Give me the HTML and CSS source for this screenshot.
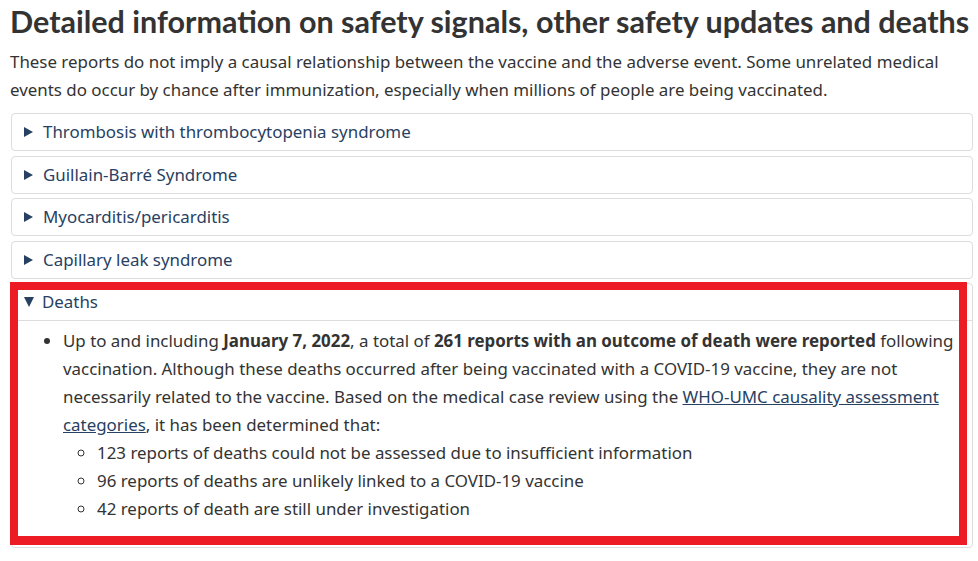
FILE: index.html
```html
<!DOCTYPE html>
<html lang="en">
<head>
<meta charset="utf-8">
<link rel="stylesheet" href="styles.css">
</head>
<body>
<main class="page">
  <h2 class="title">Detailed information on safety signals, other safety updates and deaths</h2>
  <p class="intro">These reports do not imply a causal relationship between the vaccine and the adverse event. Some unrelated medical events do occur by chance after immunization, especially when millions of people are being vaccinated.</p>

  <details class="acc">
    <summary class="acc-sum">Thrombosis with thrombocytopenia syndrome</summary>
  </details>
  <details class="acc">
    <summary class="acc-sum">Guillain-Barré Syndrome</summary>
  </details>
  <details class="acc">
    <summary class="acc-sum">Myocarditis/pericarditis</summary>
  </details>
  <details class="acc">
    <summary class="acc-sum">Capillary leak syndrome</summary>
  </details>
  <details class="acc acc-open" open>
    <summary class="acc-sum">Deaths</summary>
    <div class="acc-body">
      <ul class="list">
        <li>Up to and including <strong>January 7, 2022</strong>, a total of <strong>261 reports with an outcome of death were reported</strong> following vaccination. Although these deaths occurred after being vaccinated with a COVID-19 vaccine, they are not necessarily related to the vaccine. Based on the medical case review using the <a href="#" class="link">WHO-UMC causality assessment categories</a>, it has been determined that:
          <ul class="sublist">
            <li>123 reports of deaths could not be assessed due to insufficient information</li>
            <li>96 reports of deaths are unlikely linked to a COVID-19 vaccine</li>
            <li>42 reports of death are still under investigation</li>
          </ul>
        </li>
      </ul>
    </div>
    <div class="highlight"></div>
  </details>
</main>
</body>
</html>
```

FILE: styles.css
```css
html, body {
  margin: 0;
  padding: 0;
  background: #fff;
}

.page {
  padding: 0 5px 0 10px;
  font-family: "Noto Sans", "Open Sans", sans-serif;
  font-size: 16.9px;
  line-height: 28px;
  color: #333;
}

.title {
  font-family: Lato, "Noto Sans", sans-serif;
  font-weight: 700;
  font-size: 30.5px;
  line-height: 38px;
  color: #333;
  margin: 2px 0 8px 0;
  white-space: nowrap;
}

.intro {
  margin: 0 0 9px 0;
}

.acc {
  border: 1px solid #ddd;
  border-radius: 4px;
  margin: 0 0 4.5px 1px;
  position: relative;
}

.acc-sum {
  list-style: none;
  display: flex;
  align-items: center;
  height: 36px;
  padding-left: 12px;
  color: #284162;
  cursor: pointer;
}

.acc-sum::-webkit-details-marker {
  display: none;
}

.acc-sum::before {
  content: "";
  width: 0;
  height: 0;
  border-top: 5px solid transparent;
  border-bottom: 5px solid transparent;
  border-left: 9px solid #284162;
  margin-right: 10px;
}

.acc-open {
  margin-top: 1px;
}

.acc-open .acc-sum {
  height: 36px;
  border-bottom: 1px solid #ddd;
}

.acc-open .acc-sum::before {
  border-left: 5.5px solid transparent;
  border-right: 5.5px solid transparent;
  border-top: 10px solid #284162;
  border-bottom: 0;
  margin-right: 8px;
}

.acc-body {
  padding: 6px 12px 24px 12px;
}

.list {
  margin: 0;
  padding-left: 39px;
  list-style: disc;
}

.sublist {
  margin: 0;
  padding-left: 34px;
  list-style: circle;
}

strong {
  font-weight: 700;
  color: #333;
}

.link {
  color: #284162;
  text-decoration: underline;
}

.highlight {
  position: absolute;
  left: -2px;
  top: -2px;
  right: 5px;
  bottom: 2px;
  border: 8px solid #ed1c24;
  border-bottom-width: 9px;
  pointer-events: none;
}
```
